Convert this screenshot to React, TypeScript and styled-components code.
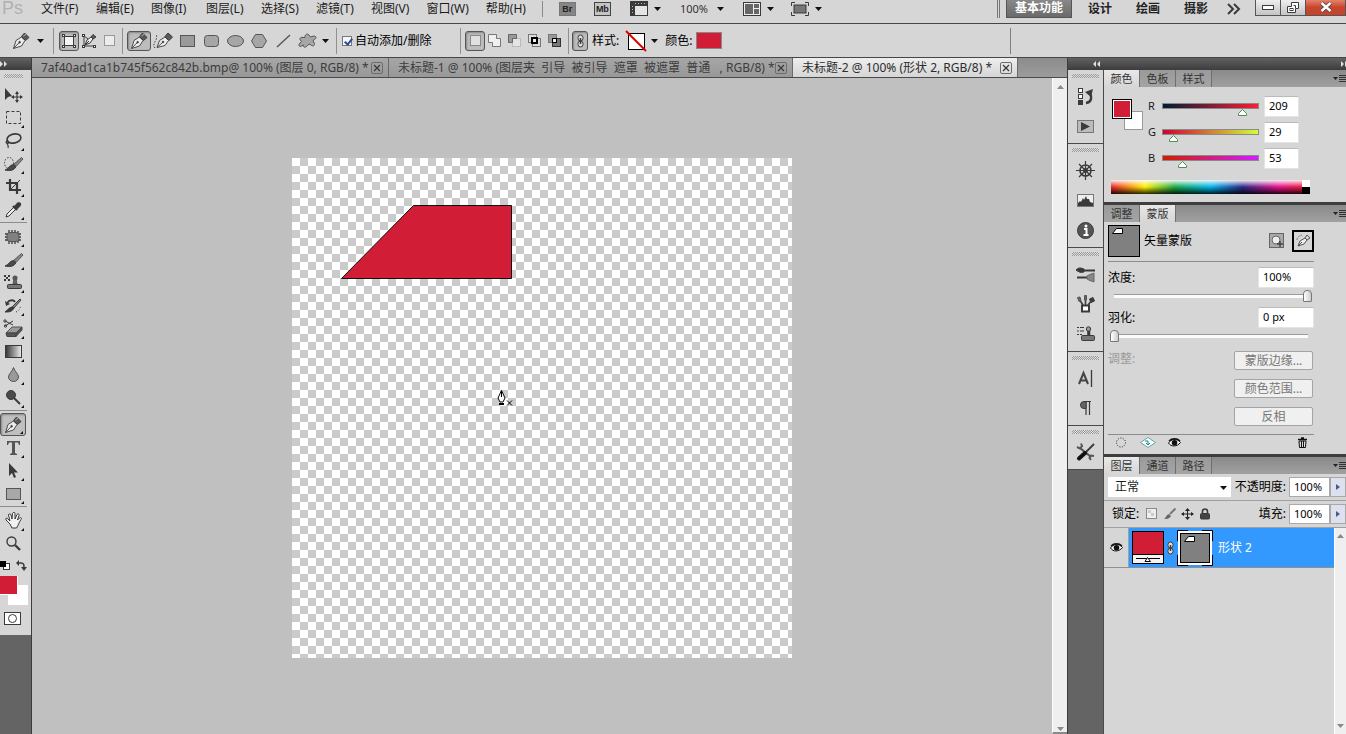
import React from "react";
import styled, { createGlobalStyle, css } from "styled-components";

const ui = {
  face: "#d6d6d6",
  line: "#464646",
  dark: "#646464",
  text: "#1c1c1c",
  red: "#d11d35",
};

const Global = createGlobalStyle`
  * { box-sizing: border-box; }
  html, body { margin: 0; padding: 0; }
  body, button, input, select {
    font-family: "Noto Sans", "Noto Sans CJK SC", sans-serif;
    font-size: 12px;
    line-height: 16px;
    color: ${ui.text};
  }
  button, input, select { margin: 0; padding: 0; border: 0; background: none; border-radius: 0; outline: none; }
  svg { display: block; flex: none; overflow: visible; }
`;

/* ---------- shell ---------- */

const Shell = styled.div`
  display: flex;
  flex-direction: column;
  height: 100vh;
  min-width: 1200px;
  overflow: hidden;
  background: ${ui.face};
`;

const MenuBar = styled.header`
  display: flex;
  align-items: center;
  flex: none;
  height: 24px;
  padding-bottom: 6px;
  border-bottom: 1px solid ${ui.line};
`;

const Logo = styled.span`
  width: 41px;
  padding-left: 2px;
  font-family: "Liberation Sans", sans-serif;
  font-size: 18px;
  line-height: 17px;
  color: #b0b0b0;
`;

const Menus = styled.nav`
  display: flex;
  gap: 17px;
`;

const MenuItem = styled.button`
  min-width: 38px;
  text-align: left;
  white-space: nowrap;
`;

const MenuTools = styled.div`
  display: flex;
  align-items: center;
  margin-left: 16px;
  padding-left: 16px;
  border-left: 1px solid #8a8a8a;
`;

const ToolButton = styled.button<{ $w: number; $gap?: number }>`
  display: flex;
  align-items: center;
  justify-content: space-between;
  width: ${(p) => p.$w}px;
  margin-right: ${(p) => p.$gap || 0}px;
  font-size: 11px;
  color: #333;
`;

const AppBadge = styled.span<{ $light?: boolean }>`
  width: 17px;
  height: 14px;
  font: bold 9px/14px "Liberation Sans", sans-serif;
  text-align: center;
  color: #222;
  background: ${(p) => (p.$light ? "#c4c4c4" : "#858585")};
  box-shadow: inset 0 0 0 1px ${(p) => (p.$light ? "#444" : "#777")};
`;

const Workspaces = styled.div`
  display: flex;
  align-items: center;
  width: 349px;
  height: 18px;
  margin-left: auto;
  border-left: 3px double #777;
`;

const WorkspaceTab = styled.button<{ $on?: boolean }>`
  width: ${(p) => (p.$on ? 66 : 48)}px;
  height: 19px;
  font-weight: bold;
  color: ${(p) => (p.$on ? "#fff" : "#222")};
  ${(p) =>
    p.$on &&
    css`
      margin: 0 4px 0 6px;
      background: linear-gradient(#8a8a8a, #6a6a6a);
      border: 1px solid #555;
      border-top: 0;
    `}
`;

const WindowButtons = styled.div`
  display: flex;
  margin: 0 0 2px auto;
`;

const WindowButton = styled.button<{ $close?: boolean }>`
  display: flex;
  align-items: center;
  justify-content: center;
  width: ${(p) => (p.$close ? 41 : 25)}px;
  height: 16px;
  border: 1px solid #555;
  border-top: 0;
  border-right-width: ${(p) => (p.$close ? 1 : 0)}px;
  background: ${(p) =>
    p.$close ? "linear-gradient(#e2826c, #c8452c 50%, #c2452c)" : "linear-gradient(#efefef, #c4c4c4)"};
`;

/* ---------- options bar ---------- */

const OptionsBar = styled.div`
  display: flex;
  align-items: center;
  flex: none;
  height: 34px;
  padding-left: 12px;
  border-bottom: 1px solid ${ui.line};
`;

const Rule = styled.span<{ $l: number; $r: number }>`
  flex: none;
  width: 1px;
  height: 26px;
  margin: 0 ${(p) => p.$r}px 0 ${(p) => p.$l}px;
  background: #909090;
`;

const OptionButton = styled.button<{ $w: number; $on?: boolean }>`
  display: flex;
  flex: none;
  align-items: center;
  justify-content: center;
  width: ${(p) => p.$w}px;
  height: 20px;
  ${(p) =>
    p.$on &&
    css`
      border: 1px solid #555;
      border-radius: 3px;
      background: #bcbcbc;
      box-shadow: inset 1px 1px 2px #888;
    `}
`;

const DropButton = styled.button<{ $l: number; $r: number }>`
  margin: 0 ${(p) => p.$r}px 0 ${(p) => p.$l}px;
`;

const CheckLabel = styled.label`
  display: flex;
  align-items: center;
  gap: 3px;
  width: 118px;
  white-space: nowrap;
  color: #000;
`;

const CheckBox = styled.input`
  appearance: none;
  display: grid;
  width: 10px;
  height: 10px;
  border: 1px solid #777;
  background: #f4f6fb;
  &:checked::after {
    content: "";
    width: 3px;
    height: 6px;
    margin: 0 0 0 3px;
    border: solid #2b4c9b;
    border-width: 0 2px 2px 0;
    transform: rotate(40deg);
  }
`;

const OptionLabel = styled.span`
  width: 28px;
  white-space: nowrap;
  color: #000;
`;

const ColorChip = styled.button`
  width: 26px;
  height: 17px;
  margin-left: 3px;
  border: 1px solid #888;
  background: ${ui.red};
`;

const OptionsEnd = styled.span`
  width: 336px;
  height: 26px;
  margin-left: auto;
  border-left: 1px solid #808080;
`;

/* ---------- workspace ---------- */

const Workspace = styled.div`
  display: grid;
  grid-template-columns: 32px minmax(0, 1fr) 279px;
  flex: 1;
  min-height: 0;
`;

const DarkHead = styled.div`
  display: flex;
  flex: none;
  align-items: center;
  justify-content: space-between;
  height: 12px;
  background: linear-gradient(#616161, #3c3c3c);
`;

const Grip = styled.div`
  flex: none;
  height: 4px;
  margin: 4px 4px 3px;
  background: repeating-conic-gradient(#9a9a9a 0 25%, #dedede 0 50%) 0 0 / 2px 2px;
`;

const ToolColumn = styled.aside`
  display: flex;
  flex-direction: column;
  background: ${ui.dark};
  border-right: 1px solid #3c3c3c;
`;

const ToolBox = styled.div`
  display: flex;
  flex-direction: column;
  padding: 0 4px 9px 0;
  background: ${ui.face};
`;

const ToolGroup = styled.div`
  display: flex;
  flex-direction: column;
  padding-top: 2px;
  & + & {
    margin-top: 1px;
    border-top: 1px solid #8c8c8c;
  }
`;

const Tool = styled.button<{ $on?: boolean; $more?: boolean }>`
  position: relative;
  display: flex;
  align-items: center;
  justify-content: center;
  width: 26px;
  height: 23px;
  ${(p) =>
    p.$on &&
    css`
      border: 1px solid #555;
      border-radius: 3px;
      background: #c0c0c0;
      box-shadow: inset 1px 1px 2px #888;
    `}
  ${(p) =>
    p.$more &&
    css`
      &::after {
        content: "";
        position: absolute;
        right: 2px;
        bottom: 1px;
        border-left: 3px solid transparent;
        border-bottom: 3px solid #111;
      }
    `}
`;

const ColorWell = styled.div`
  display: flex;
  flex-direction: column;
  align-items: flex-start;
  gap: 5px;
  padding-top: 5px;
`;

/* ---------- document ---------- */

const DocumentPane = styled.main`
  display: flex;
  flex-direction: column;
  min-width: 0;
`;

const DocTabs = styled.div`
  display: flex;
  flex: none;
  height: 20px;
  background: linear-gradient(#8c8c8c, #9c9c9c);
  border-bottom: 1px solid #4a4a4a;
`;

const DocTab = styled.div<{ $w: number; $on?: boolean }>`
  display: flex;
  align-items: center;
  justify-content: space-between;
  flex: 0 1 ${(p) => p.$w}px;
  padding: 1px 5px 0 9px;
  white-space: pre;
  border-right: 1px solid #6a6a6a;
  color: ${(p) => (p.$on ? "#2c2c2c" : "#3c3c3c")};
  background: ${(p) => (p.$on ? "linear-gradient(#eeeeee, #d6d6d6)" : "linear-gradient(#a6a6a6, #989898)")};
`;

const CloseTab = styled.button`
  display: flex;
  align-items: center;
  justify-content: center;
  width: 12px;
  height: 12px;
  border: 1px solid #6c6c6c;
  border-radius: 2px;
`;

const Stage = styled.div`
  display: flex;
  flex: 1;
  min-height: 0;
  background: #c0c0c0;
`;

const Pasteboard = styled.div`
  display: flex;
  flex: 1;
  align-items: center;
  justify-content: center;
  min-width: 0;
  padding-top: 4px;
  overflow: hidden;
`;

const Artboard = styled.div`
  position: relative;
  flex: none;
  width: 500px;
  height: 500px;
  background: repeating-conic-gradient(#cbcbcb 0 25%, #ffffff 0 50%) 0 0 / 16px 16px;
`;

const PenCursor = styled.div`
  position: absolute;
  left: 204px;
  top: 232px;
`;

const ScrollTrack = styled.div`
  display: flex;
  flex: none;
  flex-direction: column;
  align-items: center;
  justify-content: space-between;
  width: 15px;
  padding: 7px 0 1px;
  background: #efefef;
  border-left: 1px solid #fff;
  border-bottom: 2px solid #8a8a8a;
`;

/* ---------- right side ---------- */

const RightSide = styled.aside`
  display: flex;
  flex-direction: column;
  min-height: 0;
  border-left: 1px solid #3c3c3c;
`;

const HeadInset = styled.span`
  padding-left: 25px;
`;

const HeadEdge = styled.span`
  width: 5px;
  overflow: hidden;
`;

const RightBody = styled.div`
  display: grid;
  grid-template-columns: 36px minmax(0, 1fr);
  flex: 1;
  min-height: 0;
`;

const Dock = styled.div`
  background: ${ui.dark};
  border-right: 1px solid #4a4a4a;
`;

const DockGroup = styled.div`
  display: flex;
  flex-direction: column;
  padding-bottom: 2px;
  background: ${ui.face};
  border-bottom: 1px solid #4a4a4a;
`;

const DockButton = styled.button`
  display: flex;
  align-items: center;
  justify-content: center;
  width: 100%;
  height: 30px;
`;

const Panels = styled.div`
  display: flex;
  flex-direction: column;
  min-height: 0;
  background: ${ui.face};
`;

const Panel = styled.section<{ $grow?: boolean }>`
  display: flex;
  flex-direction: column;
  flex: ${(p) => (p.$grow ? "1" : "none")};
  min-height: 0;
  & + & {
    border-top: 3px solid #3e3e3e;
  }
`;

const PanelTabs = styled.div`
  display: flex;
  flex: none;
  height: 17px;
  background: linear-gradient(#8a8a8a, #a0a0a0);
`;

const PanelTab = styled.button<{ $on?: boolean }>`
  width: 36px;
  font-size: 11px;
  border-right: 1px solid #6f6f6f;
  color: #333;
  background: ${(p) => (p.$on ? "linear-gradient(#e8e8e8, #d6d6d6)" : "linear-gradient(#9a9a9a, #a4a4a4)")};
`;

const PanelMenu = styled.button`
  display: flex;
  align-items: center;
  margin-left: auto;
`;

const ColorBody = styled.div`
  display: grid;
  grid-template-columns: 32px 1fr;
  column-gap: 4px;
  padding: 6px 8px 8px;
`;

const SwatchCell = styled.div`
  padding-top: 5px;
`;

const ColorRow = styled.div`
  display: grid;
  grid-template-columns: 14px 97px 35px;
  align-items: center;
  height: 26px;
  font-size: 11px;
`;

const ColorTrack = styled.div`
  position: relative;
  display: flex;
`;

const ColorRange = styled.input<{ $from: string; $to: string }>`
  appearance: none;
  display: block;
  width: 100%;
  height: 6px;
  border: 1px solid #8a8a8a;
  background: linear-gradient(90deg, ${(p) => p.$from}, ${(p) => p.$to});
  &::-webkit-slider-thumb {
    appearance: none;
    width: 1px;
    height: 4px;
    background: transparent;
  }
`;

const Pointer = styled.svg`
  position: absolute;
  top: 6px;
  margin-left: -4px;
`;

const NumberBox = styled.input<{ $w: number }>`
  width: ${(p) => p.$w}px;
  height: 21px;
  padding: 0 4px 2px;
  font-size: 11px;
  color: #000;
  background: #fff;
  border: 1px solid #e4e4e4;
  border-top-color: #bbb;
`;

const ValueCell = styled.div`
  margin-left: 5px;
`;

const Spectrum = styled.div`
  display: flex;
  grid-column: 1 / -1;
  justify-content: flex-end;
  width: 199px;
  height: 14px;
  margin-top: 9px;
  margin-left: -1px;
  background:
    linear-gradient(rgba(255, 255, 255, 0.9), rgba(255, 255, 255, 0) 50%, rgba(0, 0, 0, 0) 50%, rgba(0, 0, 0, 0.85)),
    linear-gradient(90deg, #e8202a, #ffee00 17%, #1aa845 32%, #00b4ec 50%, #2a2b86 66%, #e4118b 84%, #e8202a);
`;

const SpectrumEnds = styled.span`
  width: 8px;
  background: linear-gradient(#fff 50%, #000 50%);
`;

const MaskBody = styled.div`
  width: 214px;
  padding: 3px 4px 0;
`;

const MaskHead = styled.div`
  display: flex;
  align-items: center;
  height: 37px;
  padding-bottom: 5px;
  color: #000;
  border-bottom: 1px solid #8c8c8c;
`;

const MaskName = styled.span`
  flex: 1;
  padding-left: 4px;
`;

const PathMaskButton = styled.button`
  display: flex;
  align-items: center;
  justify-content: center;
  width: 22px;
  height: 22px;
  margin-left: 8px;
  border: 2px solid #000;
`;

const Setting = styled.div`
  display: grid;
  grid-template-columns: 1fr 56px;
  align-items: center;
  height: 40px;
  padding-top: 5px;
  color: #000;
`;

const SettingRange = styled.input`
  appearance: none;
  grid-column: 1 / -1;
  width: 202px;
  height: 12px;
  margin: 1px 0 0 2px;
  background: none;
  &::-webkit-slider-runnable-track {
    height: 12px;
    background: linear-gradient(#9a9a9a 1px, #fbfbfb 1px) center / calc(100% - 8px) 4px no-repeat;
  }
  &::-webkit-slider-thumb {
    appearance: none;
    width: 9px;
    height: 12px;
    border: 1px solid #777;
    border-radius: 4px 4px 1px 1px;
    background: linear-gradient(90deg, #fff, #ccc);
  }
`;

const Refine = styled.div`
  display: flex;
  justify-content: space-between;
  height: 84px;
  margin-top: 9px;
  color: #9a9a9a;
  border-bottom: 1px solid #8c8c8c;
`;

const RefineButtons = styled.div`
  display: flex;
  flex-direction: column;
  gap: 9px;
  margin-right: 1px;
`;

const RefineButton = styled.button`
  flex: none;
  width: 79px;
  height: 19px;
  color: #777;
  border: 1px solid #a4a4a4;
  border-radius: 2px;
  background: #f0f0f0;
`;

const MaskFoot = styled.div`
  display: flex;
  align-items: center;
  gap: 12px;
  height: 19px;
  padding: 0 6px 4px 5px;
`;

const Spacer = styled.span`
  flex: 1;
`;

const LayerControls = styled.div`
  display: flex;
  flex: none;
  align-items: center;
  height: 27px;
  padding-left: 4px;
  white-space: nowrap;
  color: #000;
  border-bottom: 1px solid #a0a0a0;
`;

const BlendField = styled.div`
  position: relative;
  flex: 1;
  height: 20px;
`;

const Blend = styled.select`
  appearance: none;
  width: 100%;
  height: 20px;
  padding-left: 7px;
  background: #fff;
`;

const BlendArrow = styled.span`
  position: absolute;
  right: 4px;
  top: 9px;
  pointer-events: none;
`;

const FieldLabel = styled.label`
  margin: 0 3px 0 4px;
`;

const PercentBox = styled.input`
  width: 41px;
  height: 20px;
  padding: 0 4px 2px;
  font-size: 11px;
  color: #000;
  background: #fff;
  border: 1px solid #aaa;
`;

const Stepper = styled.button`
  display: flex;
  align-items: center;
  justify-content: center;
  width: 16px;
  height: 20px;
  border: 1px solid #a8a8a8;
  background: #dde1ee;
`;

const LockIcons = styled.div`
  display: flex;
  flex: 1;
  align-items: center;
  gap: 4px;
  padding-left: 3px;
`;

const PlainButton = styled.button`
  display: flex;
`;

const LayerArea = styled.div`
  display: flex;
  flex: 1;
  min-height: 0;
`;

const LayerList = styled.div`
  flex: 1;
`;

const LayerRow = styled.div`
  display: grid;
  grid-template-columns: 25px 1fr;
  height: 40px;
  border-bottom: 1px solid #909090;
`;

const EyeCell = styled.button`
  display: flex;
  align-items: center;
  justify-content: center;
  border-right: 1px solid #a0a0a0;
`;

const LayerBody = styled.div`
  display: flex;
  align-items: center;
  padding-left: 3px;
  color: #fff;
  background: #3399ff;
`;

const LinkSlot = styled.span`
  padding: 0 4px 0 3px;
`;

const LayerName = styled.span`
  padding-left: 6px;
`;

const ListScroll = styled(ScrollTrack)`
  width: 12px;
  padding: 6px 0 6px;
  border-bottom: 0;
`;

/* ---------- drawings ---------- */

const INK = "#3a3a3a";

const Svg = ({ w, h, children }: { w: number; h: number; children: React.ReactNode }) => (
  <svg width={w} height={h} viewBox={`0 0 ${w} ${h}`} fill="none" stroke={INK} strokeWidth="1">
    {children}
  </svg>
);

const Caret = ({ w = 7 }: { w?: number }) => (
  <Svg w={w} h={4}>
    <path d={`M0 0H${w}L${w / 2} 4Z`} fill="#111" stroke="none" />
  </Svg>
);

const MiniTri = ({ up }: { up?: boolean }) => (
  <Svg w={7} h={4}>
    <path d={up ? "M0 4H7L3.5 0Z" : "M0 0H7L3.5 4Z"} fill="#888" stroke="none" />
  </Svg>
);

const DoubleArrow = ({ left }: { left?: boolean }) => (
  <Svg w={7} h={6}>
    <path
      d={left ? "M3 0V6L0 3ZM7 0V6L4 3Z" : "M0 0V6L3 3ZM4 0V6L7 3Z"}
      fill="#e0e0e0"
      stroke="none"
    />
  </Svg>
);

const PenNib = () => (
  <Svg w={18} h={18}>
    <path d="M1.5 16.5L4 8.5L9.5 5L13 8.5L9.5 14Z" fill="#ececec" stroke="#4a4a4a" />
    <path d="M1.5 16.5L7 10.8" stroke="#4a4a4a" />
    <circle cx="7.6" cy="10.2" r="0.8" fill={INK} />
    <path d="M9.5 4.5L12.5 1L17 5.5L13.5 8.5Z" fill="#5a5a5a" />
    <path d="M11.3 4.2L14.5 1.8" stroke="#aaa" />
  </Svg>
);

const FreePen = () => (
  <Svg w={21} h={18}>
    <path d="M4 15.5L6.5 8.5L12 5L15.5 8.5L12 13.5Z" fill="#ececec" stroke="#4a4a4a" />
    <path d="M4 15.5L9.5 10.5" stroke="#4a4a4a" />
    <circle cx="10" cy="10" r="0.8" fill={INK} />
    <path d="M12 4.5L15 1L19.5 5L16 8.5Z" fill="#5a5a5a" />
    <path d="M2 16C-2 11 6 8 3 2" strokeDasharray="1.5 1.5" />
  </Svg>
);

const ShapeLayer = () => (
  <Svg w={14} h={14}>
    <rect x="2.5" y="2.5" width="9" height="9" fill="#f4f4f4" />
    <g fill="#fff">
      <rect x="0.5" y="0.5" width="2" height="2" />
      <rect x="11.5" y="0.5" width="2" height="2" />
      <rect x="0.5" y="11.5" width="2" height="2" />
      <rect x="11.5" y="11.5" width="2" height="2" />
    </g>
  </Svg>
);

const PathsMode = () => (
  <Svg w={14} h={14}>
    <path d="M2 2V12H12M2 2L6 5" />
    <path d="M3 11L5 6L9 3L11 5L8 9Z" fill="#eee" />
    <path d="M3 11L7 7" />
    <path d="M9 3L11 0.5L14 3L11 5Z" fill="#5a5a5a" />
    <rect x="0.5" y="0.5" width="2" height="2" fill="#fff" />
    <rect x="0.5" y="11.5" width="2" height="2" fill="#fff" />
    <rect x="11.5" y="11.5" width="2" height="2" fill="#fff" />
  </Svg>
);

const Box = ({ w = 15, h = 12, r = 0, fill = "#9a9a9a", line = "#555" }) => (
  <Svg w={w} h={h}>
    <rect x="0.5" y="0.5" width={w - 1} height={h - 1} rx={r} fill={fill} stroke={line} />
  </Svg>
);

const EllipseShape = () => (
  <Svg w={17} h={12}>
    <ellipse cx="8.5" cy="6" rx="8" ry="5.5" fill="#a6a6a6" stroke="#555" />
  </Svg>
);

const Hexagon = () => (
  <Svg w={16} h={14}>
    <path d="M4.5 0.5H11.5L15.5 7L11.5 13.5H4.5L0.5 7Z" fill="#a6a6a6" stroke="#555" />
  </Svg>
);

const LineShape = () => (
  <Svg w={15} h={14}>
    <path d="M1 13L14 1" stroke="#555" strokeWidth="1.4" />
  </Svg>
);

const Blob = () => (
  <Svg w={19} h={16}>
    <path
      d="M7 4.500C6.500 1.500 9.500 0 11 2L12.500 4L16 3C18.500 3 18.500 5.500 16.500 6.500L15 7.500L16.500 10.500C17 13 14.500 13.500 13 12L11 11L8.500 13.500C6.500 15 5 14 5.500 12L2.500 13.500C0.500 13.500 0.500 11.500 2 10L3.500 8.500L2 6.500C1.500 4.500 3.500 4 5 4.500Z"
      fill="#a6a6a6"
      stroke="#555"
    />
  </Svg>
);

const Combine = ({ kind }: { kind: "add" | "sub" | "int" | "xor" }) => (
  <Svg w={14} h={13}>
    {kind === "add" && (
      <path d="M0.5 0.5H8.5V4.5H12.5V12.5H4.5V8.5H0.5Z" fill="#f0f0f0" stroke="#777" />
    )}
    {kind === "sub" && (
      <>
        <rect x="4.5" y="4.5" width="8" height="8" fill="#e4e4e4" stroke="#bbb" />
        <path d="M0.5 8.5V0.5H8.5V4.5H4.5V8.5Z" fill="#999" stroke="#666" />
      </>
    )}
    {kind === "int" && (
      <>
        <rect x="0.5" y="0.5" width="8" height="8" fill="#ddd" stroke="#777" />
        <rect x="4.5" y="4.5" width="8" height="8" fill="#ddd" stroke="#777" />
        <rect x="4" y="4" width="5" height="5" fill="#eee" stroke="#000" strokeWidth="2" />
      </>
    )}
    {kind === "xor" && (
      <>
        <rect x="0.5" y="0.5" width="8" height="8" fill="#999" stroke="#777" />
        <rect x="4.5" y="4.5" width="8" height="8" fill="#777" stroke="#333" />
        <rect x="4.5" y="4.5" width="4" height="4" fill="#eee" stroke="#000" />
      </>
    )}
  </Svg>
);

const ChainLink = () => (
  <Svg w={7} h={14}>
    <rect x="1" y="1" width="5" height="6" rx="2.5" fill="#ddd" />
    <rect x="1" y="7" width="5" height="6" rx="2.5" fill="#ddd" />
    <path d="M3.5 4V10" strokeWidth="1.5" />
  </Svg>
);

const NoStyle = () => (
  <Svg w={20} h={20}>
    <rect x="2.5" y="2.5" width="16" height="16" fill="#fff" stroke="#000" />
    <path d="M0 0L20 20" stroke="#e00000" strokeWidth="2" />
  </Svg>
);

const BrushShape = () => (
  <>
    <path d="M17.5 0.5L19 2L12 9.5L9.5 7.5Z" fill="#888" stroke="#555" />
    <path d="M9.5 7.5L12 9.5C10 14 5 14 1 13C5 12 5 8 9.5 7.5Z" fill="#4a4a4a" />
  </>
);

const toolIcons: Record<string, React.ReactNode> = {
  move: (
    <Svg w={18} h={14}>
      <path d="M1 0V12L4 9L8 8Z" fill={INK} stroke="none" />
      <path d="M8 9H18M13 4V14" strokeWidth="1.2" />
      <path d="M13 3L15 6H11ZM13 15L15 12H11ZM7 9L10 7V11ZM19 9L16 7V11Z" fill={INK} stroke="none" />
    </Svg>
  ),
  marquee: (
    <Svg w={15} h={13}>
      <rect x="0.5" y="0.5" width="14" height="12" strokeDasharray="3 2" />
    </Svg>
  ),
  lasso: (
    <Svg w={18} h={15}>
      <ellipse cx="10" cy="5.5" rx="7" ry="4.5" transform="rotate(-12 10 5.5)" strokeWidth="1.6" />
      <path d="M4 7C1 8 2 11 4 10.5C6 10 4 8 3 9C3 12 5 12 4 15" strokeWidth="1.2" />
    </Svg>
  ),
  quick: (
    <Svg w={19} h={14}>
      <ellipse cx="5" cy="6" rx="4.5" ry="5.5" strokeDasharray="1.5 1.5" />
      <BrushShape />
    </Svg>
  ),
  crop: (
    <Svg w={15} h={15}>
      <path d="M4 0V11H15M0 4H11V15" strokeWidth="2.2" />
      <path d="M4 11L14 1" />
    </Svg>
  ),
  eyedropper: (
    <Svg w={16} h={16}>
      <path d="M1 15L2 12L9 5L11 7L4 14Z" fill="#eee" />
      <path d="M8 4L12 8M10 5L13 1.5C15 1 15.5 2 14.5 3.5L11.5 6.5" strokeWidth="2.4" fill={INK} />
    </Svg>
  ),
  patch: (
    <Svg w={18} h={14}>
      <path d="M5 0V14M8 0V14M11 0V14M14 1V13M1 4H17M1 7H17M1 10H17" strokeWidth="1.3" />
      <rect x="3" y="2.5" width="12" height="9" rx="3" fill="#808080" stroke="#555" />
    </Svg>
  ),
  brush: (
    <Svg w={19} h={14}>
      <BrushShape />
    </Svg>
  ),
  stamp: (
    <Svg w={18} h={15}>
      <path d="M0 0H2V2H4V0H6V2H4V4H6V6H4V4H2V6H0V4H2V2H0Z" fill={INK} stroke="none" />
      <circle cx="11" cy="3" r="2.5" fill="#555" stroke="none" />
      <path d="M10 4H12L13 9H9Z" fill="#666" stroke="#555" />
      <rect x="3.5" y="9.5" width="14" height="4" rx="1" fill="#777" />
    </Svg>
  ),
  history: (
    <Svg w={18} h={15}>
      <path d="M16 1L17 2L10 10L8 9Z" fill="#888" />
      <path d="M8 9L10 10C8 14 5 14 1 14C4 12 4 10 8 9Z" fill={INK} />
      <path d="M3 5C6 1 10 2 11 4" strokeWidth="1.8" />
      <path d="M1 3L2 8L6 6Z" fill={INK} stroke="none" />
      <path d="M12 14C15 13 17 10 16 7" strokeDasharray="1 2" />
    </Svg>
  ),
  eraser: (
    <Svg w={19} h={17}>
      <path d="M2 13L8 7H18L12 13Z" fill="#999" stroke="#555" />
      <path d="M2 13H12V16.5H3ZM12 13L18 7V10L12 16.5Z" fill="#555" stroke="#444" />
      <path d="M1 1L9 5M1 6L9 1" />
      <circle cx="1" cy="1" r="1.2" />
      <circle cx="1.5" cy="6" r="1.2" />
    </Svg>
  ),
  gradient: (
    <Svg w={17} h={13}>
      <defs>
        <linearGradient id="toolGradient">
          <stop offset="0" stopColor="#333" />
          <stop offset="1" stopColor="#eee" />
        </linearGradient>
      </defs>
      <rect x="0.5" y="0.5" width="16" height="12" fill="url(#toolGradient)" />
    </Svg>
  ),
  drop: (
    <Svg w={11} h={15}>
      <path d="M5.5 0.5C7 5 10.5 7 10.5 10A5 4.5 0 0 1 0.5 10C0.5 7 4 5 5.5 0.5Z" fill="#999" stroke="#555" />
    </Svg>
  ),
  dodge: (
    <Svg w={15} h={15}>
      <circle cx="5" cy="5" r="4.5" fill="#4a4a4a" />
      <path d="M8 8L14 14" strokeWidth="2" />
    </Svg>
  ),
  pen: <PenNib />,
  type: (
    <Svg w={13} h={14}>
      <path d="M0 0H13V4H12L11 1.5H8V12L10 13V14H3V13L5 12V1.5H2L1 4H0Z" fill="#555" stroke="none" />
    </Svg>
  ),
  select: (
    <Svg w={10} h={15}>
      <path d="M1 0V13L4 10L6 15L8 14L6 9.5H10Z" fill={INK} stroke="none" />
    </Svg>
  ),
  shape: <Box h={12} fill="#a8a8a8" />,
  hand: (
    <Svg w={17} h={17}>
      <path
        d="M5 12L1 8C0 6 2 5.5 3 7L5 9L3.5 3C3.5 1.5 5.5 1.5 6 3L7 7L7.5 1.5C8 0 10 0 10 1.5V7L12 2.5C13 1 14.5 2 14 3.5L12.5 8L14.5 6C16 5 17 6 16 7.5C14 10 13.5 13 11.5 16H7Z"
        fill="#f2f2f2"
      />
    </Svg>
  ),
  zoom: (
    <Svg w={15} h={15}>
      <circle cx="5.5" cy="5.5" r="4.5" fill="#d8d8d8" strokeWidth="1.4" />
      <path d="M9 9L14 14" strokeWidth="2.4" />
    </Svg>
  ),
};

const dockIcons: Record<string, React.ReactNode> = {
  history: (
    <Svg w={18} h={17}>
      <rect x="1.5" y="0.5" width="4" height="4" fill="#fff" />
      <rect x="1.5" y="6.5" width="4" height="4" fill="#fff" />
      <rect x="1" y="12" width="5" height="5" fill={INK} stroke="none" />
      <path d="M9 15C15 14 15 9 13 5" strokeWidth="2.4" />
      <path d="M8 4L16 1L14 9Z" fill={INK} stroke="none" />
    </Svg>
  ),
  actions: (
    <Svg w={17} h={13}>
      <rect x="0.5" y="0.5" width="16" height="12" fill="#bbb" stroke="#777" />
      <path d="M4 2L13 6.5L4 11Z" fill={INK} stroke="none" />
    </Svg>
  ),
  navigator: (
    <Svg w={19} h={19}>
      <circle cx="9.5" cy="9.5" r="5.5" strokeWidth="1.6" />
      <circle cx="9.5" cy="9.5" r="2" fill={INK} />
      <path d="M9.5 0V19M0 9.5H19M3 3L16 16M16 3L3 16" strokeWidth="1.2" />
    </Svg>
  ),
  histogram: (
    <Svg w={17} h={13}>
      <rect x="0.5" y="0.5" width="16" height="12" fill="#eee" stroke="#777" />
      <path d="M1 12V9L3 7L4 8L6 4L7 6L9 2L10 5L12 5L13 8L16 9V12Z" fill={INK} stroke="none" />
    </Svg>
  ),
  info: (
    <Svg w={17} h={17}>
      <circle cx="8.5" cy="8.5" r="8" fill="#555" />
      <path d="M7 7H9.5V13M6.5 13H11.5" stroke="#fff" strokeWidth="2" />
      <circle cx="9" cy="4" r="1.5" fill="#fff" stroke="none" />
    </Svg>
  ),
  brushes: (
    <Svg w={19} h={15}>
      <path d="M0 3C3 0 5 1 8 2V5C4 6 3 5 0 3Z" fill={INK} />
      <path d="M8 3.5H19" strokeWidth="2" />
      <path d="M1 10.5H11" strokeWidth="2" />
      <path d="M11 9C14 7 16 7 18 6V15C16 14 14 14 11 12Z" fill="#888" stroke="#666" />
    </Svg>
  ),
  sources: (
    <Svg w={18} h={18}>
      <rect x="5" y="10.5" width="7" height="6" fill="#fff" strokeWidth="2" />
      <path d="M6 10L2 4M8.5 10V2M11 10L15 5" strokeWidth="1.6" />
      <path d="M0.5 2.5L3 2L4 6L2 6.5ZM7.5 0.5H9.5V5H7.5Z" fill="#666" stroke="#555" />
      <path d="M12.5 4L16 2.5L17.5 6L14 7.5Z" fill={INK} />
    </Svg>
  ),
  stamp: (
    <Svg w={18} h={16}>
      <path d="M0 1.5H2M3 1.5H7M0 5H2M3 5H7M0 8.5H2M3 8.5H5" />
      <circle cx="11.5" cy="3" r="2.2" fill="#999" />
      <path d="M11 5V9M12.5 5V9" strokeWidth="1.6" />
      <rect x="4.5" y="9.5" width="13" height="5" rx="1" fill="#777" />
    </Svg>
  ),
  character: (
    <Svg w={15} h={17}>
      <path d="M1 14L5.500 3L10 14M2.500 10.500H8.500" stroke="#444" strokeWidth="2" />
      <path d="M13.5 0V17" strokeWidth="1.3" />
    </Svg>
  ),
  paragraph: (
    <Svg w={11} h={14}>
      <path d="M6 0.5V14M9.5 0.5V14M4 0.5H11" strokeWidth="1.2" />
      <path d="M6 0.5H4A3.5 3.5 0 0 0 4 7.5H6Z" fill="#666" />
    </Svg>
  ),
  presets: (
    <Svg w={19} h={18}>
      <path d="M4 5L15 14" stroke="#555" strokeWidth="2.200" />
      <path d="M1 4L4 5.500L6 3L5 0.500M18 13L15 12.500L13.500 15L15 17" stroke="#555" strokeWidth="2" />
      <path d="M18 1L9 10" strokeWidth="1.8" />
      <path d="M9 10L3 15.500" stroke="#111" strokeWidth="4" strokeLinecap="round" />
    </Svg>
  ),
};

const Eye = () => (
  <Svg w={13} h={9}>
    <path d="M0.5 5C3 1 9 0 12.5 4.5C9 9 3 9 0.5 5Z" fill="#fff" stroke="#111" />
    <circle cx="6.5" cy="4.8" r="2.8" fill="#111" stroke="none" />
    <path d="M1 3C4 0 9 0 12 3" stroke="#111" strokeWidth="1.4" />
  </Svg>
);

const MaskThumb = ({ framed }: { framed?: boolean }) => (
  <Svg w={framed ? 34 : 32} h={framed ? 34 : 32}>
    {framed ? (
      <>
        <rect x="0" y="0" width="34" height="34" fill="#fff" stroke="none" />
        <path
          d="M-0.5 10V-0.5H10M24 -0.5H34.5V10M34.5 24V34.5H24M10 34.5H-0.5V24"
          stroke="#000"
        />
        <rect x="2.5" y="2.5" width="29" height="29" fill="#808080" stroke="#000" />
        <path d="M6.5 10.5L10.5 5.5H16.5V10.5Z" fill="#fff" stroke="#000" />
      </>
    ) : (
      <>
        <rect x="0.5" y="0.5" width="31" height="31" fill="#808080" stroke="#000" />
        <path d="M4.5 8.5L8.5 3.5H14.5V8.5Z" fill="#fff" stroke="#000" />
      </>
    )}
  </Svg>
);

const FillThumb = () => (
  <Svg w={32} h={33}>
    <rect x="0.5" y="0.5" width="31" height="32" fill="#f4f4f4" stroke="#000" />
    <rect x="1" y="1" width="30" height="22" fill={ui.red} stroke="none" />
    <path d="M1 23.5H31M4 27.5H28" stroke="#000" />
    <path d="M15.5 26.5L18.5 30.5H13Z" fill="#fff" stroke="#000" />
  </Svg>
);

const SwatchPair = () => (
  <Svg w={32} h={33}>
    <rect x="12.5" y="13.5" width="18" height="18" fill="#fff" stroke="#999" />
    <rect x="0.5" y="1.5" width="19" height="19" fill="#fff" stroke="#000" />
    <rect x="2" y="3" width="16" height="16" fill={ui.red} stroke="none" />
  </Svg>
);

const StepArrow = () => (
  <Svg w={4} h={6}>
    <path d="M0 0L4 3L0 6Z" fill="#4a5a90" stroke="none" />
  </Svg>
);

/* ---------- data ---------- */

const menus = ["文件(F)", "编辑(E)", "图像(I)", "图层(L)", "选择(S)", "滤镜(T)", "视图(V)", "窗口(W)", "帮助(H)"];

const toolGroups = [
  ["move", "marquee", "lasso", "quick", "crop", "eyedropper"],
  ["patch", "brush", "stamp", "history", "eraser", "gradient", "drop", "dodge"],
  ["pen", "type", "select", "shape"],
  ["hand", "zoom"],
];

const dockGroups = [
  ["history", "actions"],
  ["navigator", "histogram", "info"],
  ["brushes", "sources", "stamp"],
  ["character", "paragraph"],
  ["presets"],
];

const docs = [
  { title: "7af40ad1ca1b745f562c842b.bmp@ 100% (图层 0, RGB/8) *", w: 357 },
  { title: "未标题-1 @ 100% (图层夹  引导  被引导  遮罩  被遮罩  普通   , RGB/8) *", w: 404 },
  { title: "未标题-2 @ 100% (形状 2, RGB/8) *", w: 225, on: true },
];

const channels = [
  { name: "R", value: 209, from: "#001d35", to: "#ff1d35" },
  { name: "G", value: 29, from: "#d10035", to: "#d1ff35" },
  { name: "B", value: 53, from: "#d11d00", to: "#d11dff" },
];

/* ---------- sections ---------- */

const Tabs = ({ names, active }: { names: string[]; active: number }) => (
  <PanelTabs>
    {names.map((n, i) => (
      <PanelTab key={n} $on={i === active}>
        {n}
      </PanelTab>
    ))}
    <PanelMenu aria-label="面板菜单">
      <Svg w={13} h={8}>
        <path d="M0 2H5L2.5 5Z" fill="#222" stroke="none" />
        <path d="M6 0.5H13M6 2.5H13M6 4.5H13M6 6.5H13" stroke="#333" />
      </Svg>
    </PanelMenu>
  </PanelTabs>
);

const TopMenu = () => (
  <MenuBar>
    <Logo>Ps</Logo>
    <Menus>
      {menus.map((m) => (
        <MenuItem key={m}>{m}</MenuItem>
      ))}
    </Menus>
    <MenuTools>
      <ToolButton $w={17} $gap={18}>
        <AppBadge>Br</AppBadge>
      </ToolButton>
      <ToolButton $w={17} $gap={19}>
        <AppBadge $light>Mb</AppBadge>
      </ToolButton>
      <ToolButton $w={31} $gap={19} aria-label="查看额外内容">
        <Svg w={18} h={15}>
          <rect x="0" y="0" width="18" height="15" fill={INK} stroke="none" />
          <rect x="5" y="5" width="12" height="9" fill="#e4e4e4" stroke="none" />
          <path d="M5 2.5H17M2.5 5V14" stroke="#bbb" strokeDasharray="1 2" />
        </Svg>
        <Caret />
      </ToolButton>
      <ToolButton $w={44} $gap={19}>
        100%
        <Caret />
      </ToolButton>
      <ToolButton $w={31} $gap={17} aria-label="排列文档">
        <Svg w={18} h={14}>
          <rect x="0.5" y="0.5" width="17" height="13" fill="#eee" />
          <rect x="2" y="2" width="8" height="10" fill="#666" stroke="none" />
          <rect x="11" y="2" width="5" height="4" fill="#666" stroke="none" />
          <rect x="11" y="7" width="5" height="5" fill="#666" stroke="none" />
        </Svg>
        <Caret />
      </ToolButton>
      <ToolButton $w={31} aria-label="屏幕模式">
        <Svg w={18} h={14}>
          <path d="M0.5 4V0.5H4M14 0.5H17.5V4M17.5 10V13.5H14M4 13.5H0.5V10" />
          <rect x="3" y="3" width="12" height="8" fill="#777" />
        </Svg>
        <Caret />
      </ToolButton>
    </MenuTools>
    <Workspaces>
      <WorkspaceTab $on>基本功能</WorkspaceTab>
      <WorkspaceTab>设计</WorkspaceTab>
      <WorkspaceTab>绘画</WorkspaceTab>
      <WorkspaceTab>摄影</WorkspaceTab>
      <PlainButton aria-label="更多工作区">
        <Svg w={24} h={10}>
          <path d="M8 0L13 5L8 10M14 0L19 5L14 10" strokeWidth="2" />
        </Svg>
      </PlainButton>
      <WindowButtons>
        <WindowButton aria-label="最小化">
          <Svg w={12} h={5}>
            <rect x="0.5" y="0.5" width="11" height="4" fill="#fff" />
          </Svg>
        </WindowButton>
        <WindowButton aria-label="还原">
          <Svg w={12} h={11}>
            <path d="M4.5 0.5H11.5V6.5H8.5V10.5H0.5V4.5H4.5Z" fill="#fff" />
            <rect x="3" y="6.5" width="3" height="2" />
            <path d="M6.5 3.5H8.5V6" />
          </Svg>
        </WindowButton>
        <WindowButton $close aria-label="关闭">
          <Svg w={12} h={10}>
            <path d="M1.5 1L10.5 9M10.5 1L1.5 9" stroke="#444" strokeWidth="4" />
            <path d="M1.5 1L10.5 9M10.5 1L1.5 9" stroke="#fff" strokeWidth="2.4" />
          </Svg>
        </WindowButton>
      </WindowButtons>
    </Workspaces>
  </MenuBar>
);

const Options = () => (
  <OptionsBar>
    <PenNib />
    <DropButton $l={7} $r={0} aria-label="工具预设">
      <Caret />
    </DropButton>
    <Rule $l={9} $r={5} />
    <OptionButton $w={20} $on aria-label="形状图层">
      <ShapeLayer />
    </OptionButton>
    <OptionButton $w={20} aria-label="路径">
      <PathsMode />
    </OptionButton>
    <OptionButton $w={20} aria-label="填充像素">
      <Box w={11} h={11} fill="#ececec" line="#999" />
    </OptionButton>
    <Rule $l={3} $r={4} />
    <OptionButton $w={24} $on aria-label="钢笔">
      <PenNib />
    </OptionButton>
    <OptionButton $w={24} aria-label="自由钢笔">
      <FreePen />
    </OptionButton>
    <OptionButton $w={24} aria-label="矩形">
      <Box />
    </OptionButton>
    <OptionButton $w={24} aria-label="圆角矩形">
      <Box r={3} fill="#a6a6a6" />
    </OptionButton>
    <OptionButton $w={24} aria-label="椭圆">
      <EllipseShape />
    </OptionButton>
    <OptionButton $w={24} aria-label="多边形">
      <Hexagon />
    </OptionButton>
    <OptionButton $w={24} aria-label="直线">
      <LineShape />
    </OptionButton>
    <OptionButton $w={24} aria-label="自定形状">
      <Blob />
    </OptionButton>
    <DropButton $l={3} $r={0} aria-label="几何选项">
      <Caret />
    </DropButton>
    <Rule $l={7} $r={5} />
    <CheckLabel>
      <CheckBox type="checkbox" defaultChecked />
      自动添加/删除
    </CheckLabel>
    <Rule $l={0} $r={4} />
    <OptionButton $w={20} $on aria-label="新建形状图层">
      <Box w={11} h={11} fill="#e0e0e0" line="#888" />
    </OptionButton>
    <OptionButton $w={20} aria-label="添加到形状区域">
      <Combine kind="add" />
    </OptionButton>
    <OptionButton $w={20} aria-label="从形状区域减去">
      <Combine kind="sub" />
    </OptionButton>
    <OptionButton $w={20} aria-label="交叉形状区域">
      <Combine kind="int" />
    </OptionButton>
    <OptionButton $w={20} aria-label="重叠形状区域除外">
      <Combine kind="xor" />
    </OptionButton>
    <Rule $l={3} $r={3} />
    <OptionButton $w={16} $on aria-label="链接样式">
      <ChainLink />
    </OptionButton>
    <DropButton as="span" $l={4} $r={7}>
      <OptionLabel>样式:</OptionLabel>
    </DropButton>
    <NoStyle />
    <DropButton $l={5} $r={7} aria-label="样式列表">
      <Caret />
    </DropButton>
    <OptionLabel>颜色:</OptionLabel>
    <ColorChip aria-label="图层颜色" />
    <OptionsEnd />
  </OptionsBar>
);

const Toolbox = () => (
  <ToolColumn>
    <DarkHead>
      <DoubleArrow />
    </DarkHead>
    <ToolBox>
      <Grip />
      <div>
        {toolGroups.map((group) => (
          <ToolGroup key={group[0]}>
            {group.map((t) => (
              <Tool key={t} $on={t === "pen"} $more={t !== "move" && t !== "zoom"} aria-label={t}>
                {toolIcons[t]}
              </Tool>
            ))}
          </ToolGroup>
        ))}
      </div>
      <ColorWell>
        <Svg w={27} h={11}>
          <rect x="3.5" y="3.5" width="6" height="6" fill="#fff" />
          <rect x="0" y="1" width="6" height="6" fill="#000" stroke="none" />
          <path d="M18 3H21C24 3 24 5 24 8" strokeWidth="1.5" />
          <path d="M16 3L19 0V6ZM24 11L21 7H27Z" fill={INK} stroke="none" />
        </Svg>
        <Svg w={28} h={30}>
          <rect x="8" y="9" width="20" height="20" fill="#fff" stroke="none" />
          <rect x="0" y="0" width="18" height="19" fill="#fff" stroke="none" />
          <rect x="0" y="0" width="17" height="18" fill={ui.red} stroke="none" />
        </Svg>
        <Svg w={21} h={15}>
          <rect x="4.5" y="1.5" width="16" height="12" fill="#fff" />
          <circle cx="12.5" cy="7.5" r="4" />
        </Svg>
      </ColorWell>
    </ToolBox>
  </ToolColumn>
);

const DocumentArea = () => (
  <DocumentPane>
    <DocTabs>
      {docs.map((d) => (
        <DocTab key={d.title} $w={d.w} $on={d.on}>
          <span>{d.title}</span>
          <CloseTab aria-label="关闭文档">
            <Svg w={6} h={6}>
              <path d="M0 0L6 6M6 0L0 6" strokeWidth="1.3" />
            </Svg>
          </CloseTab>
        </DocTab>
      ))}
    </DocTabs>
    <Stage>
      <Pasteboard>
        <Artboard>
          <Svg w={500} h={500}>
            <path d="M49.5 120.5L121.5 47.5H219.5V120.5Z" fill={ui.red} stroke="#111" />
          </Svg>
          <PenCursor>
            <Svg w={17} h={16}>
              <path d="M5.5 0.5L2 8L4 12H7L9 8Z" fill="#fff" stroke="#000" />
              <path d="M5.5 1V7" stroke="#000" />
              <path d="M3 14H8" stroke="#000" strokeWidth="2" />
              <path d="M11 10.5L16 15.5M16 10.5L11 15.5" stroke="#000" />
            </Svg>
          </PenCursor>
        </Artboard>
      </Pasteboard>
      <ScrollTrack>
        <MiniTri up />
        <MiniTri />
      </ScrollTrack>
    </Stage>
  </DocumentPane>
);

const ColorPanel = () => (
  <Panel>
    <Tabs names={["颜色", "色板", "样式"]} active={0} />
    <ColorBody>
      <SwatchCell>
        <SwatchPair />
      </SwatchCell>
      <div>
        {channels.map((c) => (
          <ColorRow key={c.name}>
            <label htmlFor={`ch-${c.name}`}>{c.name}</label>
            <ColorTrack>
              <ColorRange
                type="range"
                min={0}
                max={255}
                defaultValue={c.value}
                aria-label={c.name}
                $from={c.from}
                $to={c.to}
              />
              <Pointer
                width="9"
                height="7"
                viewBox="0 0 9 7"
                style={{ left: `${(c.value / 255) * 100}%` }}
              >
                <path d="M4.5 0.5L8.5 4.5V6.5H0.5V4.5Z" fill="#fff" stroke="#4f8f4f" />
              </Pointer>
            </ColorTrack>
            <ValueCell>
              <NumberBox id={`ch-${c.name}`} $w={35} defaultValue={c.value} />
            </ValueCell>
          </ColorRow>
        ))}
      </div>
      <Spectrum>
        <SpectrumEnds />
      </Spectrum>
    </ColorBody>
  </Panel>
);

const MaskPanel = () => (
  <Panel>
    <Tabs names={["调整", "蒙版"]} active={1} />
    <MaskBody>
      <MaskHead>
        <MaskThumb />
        <MaskName>矢量蒙版</MaskName>
        <PlainButton aria-label="添加像素蒙版">
          <Svg w={15} h={15}>
            <rect x="0.5" y="0.5" width="14" height="14" fill="#aaa" stroke="#666" />
            <circle cx="7" cy="7" r="4" fill="#eee" stroke="#666" />
            <path d="M8 11H14M11 8V14" stroke="#222" />
          </Svg>
        </PlainButton>
        <PathMaskButton aria-label="选择矢量蒙版">
          <Svg w={14} h={13}>
            <path d="M2 12L4 7L9 4L11 6L8 10Z" fill="#eee" stroke="#555" />
            <path d="M2 12L6 8M9 4L11 1L14 4L11 6" stroke="#555" />
            <path d="M1 6C1 3 3 2 6 1" stroke="#777" strokeDasharray="2 1" />
          </Svg>
        </PathMaskButton>
      </MaskHead>
      <Setting>
        <label htmlFor="density">浓度:</label>
        <NumberBox id="density" $w={56} defaultValue="100%" />
        <SettingRange type="range" min={0} max={100} defaultValue={100} aria-label="浓度" />
      </Setting>
      <Setting>
        <label htmlFor="feather">羽化:</label>
        <NumberBox id="feather" $w={56} defaultValue="0 px" />
        <SettingRange type="range" min={0} max={100} defaultValue={0} aria-label="羽化" />
      </Setting>
      <Refine>
        <span>调整:</span>
        <RefineButtons>
          <RefineButton>蒙版边缘...</RefineButton>
          <RefineButton>颜色范围...</RefineButton>
          <RefineButton>反相</RefineButton>
        </RefineButtons>
      </Refine>
      <MaskFoot>
        <PlainButton aria-label="载入选区">
          <Svg w={15} h={11}>
            <circle cx="8" cy="5.5" r="4.5" stroke="#222" strokeDasharray="1 1.5" />
          </Svg>
        </PlainButton>
        <PlainButton aria-label="应用蒙版">
          <Svg w={16} h={11}>
            <path d="M0.5 5.5L8 0.5L15.5 5.5L8 10.5Z" fill="#f4ffff" stroke="#6aa5a5" />
            <path d="M5 4H8V8M6 6L8 8L10 6" stroke="#2c7c8c" />
          </Svg>
        </PlainButton>
        <PlainButton aria-label="停用蒙版">
          <Eye />
        </PlainButton>
        <Spacer />
        <PlainButton aria-label="删除蒙版">
          <Svg w={11} h={11}>
            <path d="M1 2.5H10M4 1H7" stroke="#111" strokeWidth="1.5" />
            <path d="M2 4H9L8.5 10.5H2.5Z" fill="#ddd" stroke="#111" />
            <path d="M4.5 4V10M6.5 4V10" stroke="#111" />
          </Svg>
        </PlainButton>
      </MaskFoot>
    </MaskBody>
  </Panel>
);

const LayersPanel = () => (
  <Panel $grow>
    <Tabs names={["图层", "通道", "路径"]} active={0} />
    <LayerControls>
      <BlendField>
        <Blend aria-label="混合模式">
          <option>正常</option>
        </Blend>
        <BlendArrow>
          <Caret />
        </BlendArrow>
      </BlendField>
      <FieldLabel htmlFor="opacity">不透明度:</FieldLabel>
      <PercentBox id="opacity" defaultValue="100%" />
      <Stepper aria-label="不透明度滑块">
        <StepArrow />
      </Stepper>
    </LayerControls>
    <LayerControls>
      <FieldLabel as="span">锁定:</FieldLabel>
      <LockIcons>
        <PlainButton aria-label="锁定透明像素">
          <Svg w={14} h={12}>
            <rect x="1.5" y="0.5" width="10" height="10" fill="#eee" stroke="#888" />
            <path d="M3 2H6V5H9V8H6V5H3Z" fill="#ccc" stroke="none" />
          </Svg>
        </PlainButton>
        <PlainButton aria-label="锁定图像像素">
          <Svg w={14} h={12}>
            <path d="M12.5 0.5L7 6" stroke="#777" strokeWidth="2" />
            <path d="M1 11C3 10 3 7 6 6L8 8C6 11 4 11 1 11Z" fill="#666" stroke="none" />
          </Svg>
        </PlainButton>
        <PlainButton aria-label="锁定位置">
          <Svg w={13} h={12}>
            <path d="M1 6H12M6.5 1V11" stroke="#222" />
            <path d="M6.5 0L9 3H4ZM6.5 12L9 9H4ZM0 6L3 4V8ZM13 6L10 4V8Z" fill="#222" stroke="none" />
          </Svg>
        </PlainButton>
        <PlainButton aria-label="锁定全部">
          <Svg w={14} h={12}>
            <path d="M4.5 5V3.5A2.5 2.5 0 0 1 9.5 3.5V5" strokeWidth="1.6" />
            <rect x="2.5" y="5.5" width="9" height="5.5" rx="1" fill="#444" />
          </Svg>
        </PlainButton>
      </LockIcons>
      <FieldLabel htmlFor="fill">填充:</FieldLabel>
      <PercentBox id="fill" defaultValue="100%" />
      <Stepper aria-label="填充滑块">
        <StepArrow />
      </Stepper>
    </LayerControls>
    <LayerArea>
      <LayerList>
        <LayerRow>
          <EyeCell aria-label="图层可见性">
            <Eye />
          </EyeCell>
          <LayerBody>
            <FillThumb />
            <LinkSlot>
              <ChainLink />
            </LinkSlot>
            <MaskThumb framed />
            <LayerName>形状 2</LayerName>
          </LayerBody>
        </LayerRow>
      </LayerList>
      <ListScroll>
        <MiniTri up />
        <MiniTri />
      </ListScroll>
    </LayerArea>
  </Panel>
);

export default function App() {
  return (
    <Shell>
      <Global />
      <TopMenu />
      <Options />
      <Workspace>
        <Toolbox />
        <DocumentArea />
        <RightSide>
          <DarkHead>
            <HeadInset>
              <DoubleArrow left />
            </HeadInset>
            <HeadEdge>
              <DoubleArrow />
            </HeadEdge>
          </DarkHead>
          <RightBody>
            <Dock>
              {dockGroups.map((group) => (
                <DockGroup key={group[0]}>
                  <Grip />
                  {group.map((name) => (
                    <DockButton key={name} aria-label={name}>
                      {dockIcons[name]}
                    </DockButton>
                  ))}
                </DockGroup>
              ))}
            </Dock>
            <Panels>
              <ColorPanel />
              <MaskPanel />
              <LayersPanel />
            </Panels>
          </RightBody>
        </RightSide>
      </Workspace>
    </Shell>
  );
}
